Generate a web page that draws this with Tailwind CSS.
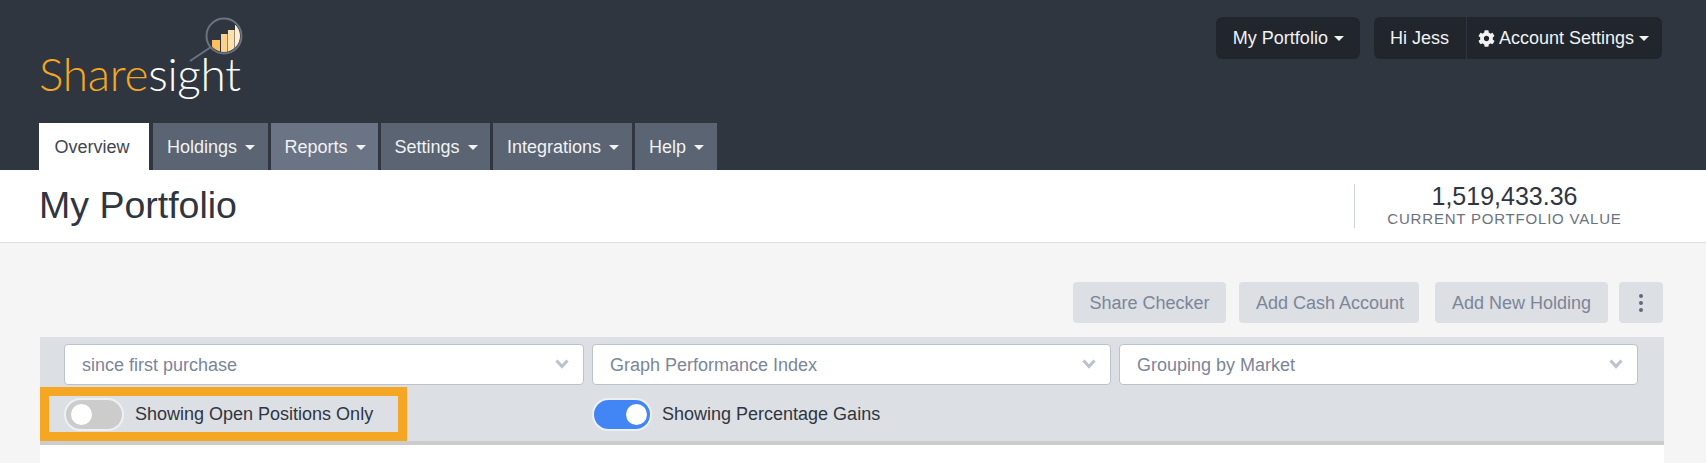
<!DOCTYPE html>
<html lang="en">
<head>
  <meta charset="UTF-8" />
  <meta name="viewport" content="width=device-width, initial-scale=1" />
  <title>Sharesight - My Portfolio</title>
  <script src="https://cdn.jsdelivr.net/npm/@tailwindcss/browser@4"></script>
</head>
<body class="h-[463px] overflow-hidden bg-[#f5f5f5] font-['Liberation_Sans',Arial,sans-serif] text-[18px] text-[#2f3640]">

  <!-- top bar -->
  <header class="h-[170px] bg-[#2f3640] px-[39px] flex flex-col">
    <div class="flex-1 flex justify-between">
      <div class="relative w-[220px]">
        <div class="absolute left-0 top-[44px] text-[46px] leading-[60px] font-['Lato',sans-serif] font-light tracking-[-0.3px] whitespace-nowrap">
          <span class="text-[#f5a623]">Share</span><span class="text-white">sight</span>
        </div>
        <svg class="absolute left-[109px] top-[14px]" width="96" height="56" viewBox="148 14 96 56">
          <defs><clipPath id="lens"><circle cx="224" cy="36" r="16" /></clipPath></defs>
          <line x1="190" y1="61" x2="211" y2="47" stroke="#6b7280" stroke-width="2" />
          <g clip-path="url(#lens)">
            <rect x="212" y="40" width="8" height="12" fill="#fbbf5d" />
            <rect x="221" y="34" width="6.500" height="18" fill="#fcd28b" />
            <rect x="228" y="30" width="6.500" height="22" fill="#fde0ae" />
            <rect x="235" y="25" width="5" height="27" fill="#fff0d5" />
          </g>
          <circle cx="224" cy="36" r="17.500" fill="none" stroke="#6b7280" stroke-width="2" />
        </svg>
      </div>

      <div class="flex gap-[14px] mt-[17px] h-[42px] mr-[5px] text-[#f1f2f4]">
        <div class="flex items-center gap-[6px] pl-[17px] pr-[16px] bg-[#21262d] rounded-[6px]">
          My Portfolio
          <span class="border-x-[5px] border-t-[5px] border-x-transparent border-t-[#f1f2f4]"></span>
        </div>
        <div class="flex bg-[#21262d] rounded-[6px]">
          <div class="flex items-center pl-[16px] pr-[17px] border-r border-[#2f3640]">Hi Jess</div>
          <div class="flex items-center gap-[4px] pl-[11px] pr-[13px]">
            <svg width="17" height="17" viewBox="0 0 512 512" fill="#f1f2f4"><path d="M487.4 315.7l-42.6-24.6c4.3-23.2 4.3-47 0-70.2l42.6-24.6c4.9-2.8 7.1-8.6 5.5-14-11.1-35.6-30-67.8-54.7-94.6-3.8-4.1-10-5.1-14.8-2.3L380.8 110c-17.9-15.4-38.5-27.3-60.8-35.1V25.8c0-5.6-3.9-10.5-9.4-11.7-36.7-8.2-74.3-7.8-109.2 0-5.5 1.2-9.4 6.1-9.4 11.7V75c-22.2 7.9-42.8 19.8-60.8 35.1L88.7 85.500c-4.9-2.8-11-1.9-14.8 2.3-24.7 26.7-43.6 58.9-54.7 94.6-1.7 5.4.6 11.2 5.5 14L67.3 221c-4.3 23.2-4.3 47 0 70.2l-42.6 24.6c-4.9 2.8-7.1 8.6-5.5 14 11.1 35.6 30 67.8 54.7 94.6 3.8 4.1 10 5.1 14.8 2.3l42.6-24.6c17.9 15.4 38.5 27.3 60.8 35.1v49.2c0 5.6 3.9 10.5 9.4 11.7 36.7 8.2 74.3 7.8 109.2 0 5.5-1.2 9.4-6.1 9.4-11.7v-49.2c22.2-7.9 42.8-19.8 60.8-35.1l42.6 24.6c4.9 2.8 11 1.9 14.8-2.3 24.7-26.7 43.6-58.9 54.7-94.6 1.500-5.5-.7-11.3-5.6-14.1zM256 336c-44.1 0-80-35.9-80-80s35.9-80 80-80 80 35.9 80 80-35.9 80-80 80z" /></svg>
            Account Settings
            <span class="border-x-[5px] border-t-[5px] border-x-transparent border-t-[#f1f2f4] ml-[1px]"></span>
          </div>
        </div>
      </div>
    </div>

    <!-- tabs -->
    <nav class="flex h-[47px] gap-[3px] text-[#f1f2f4]">
      <div class="w-[110px] mr-[1px] pr-[4px] pt-[1px] flex items-center justify-center bg-white text-[#3f4650]">Overview</div>
      <div class="w-[115px] pl-[1px] pt-[1px] flex items-center justify-center gap-[8px] bg-[#5a6472]">Holdings <span class="border-x-[5px] border-t-[5px] border-x-transparent border-t-[#f1f2f4]"></span></div>
      <div class="w-[107px] pl-[1px] pt-[1px] flex items-center justify-center gap-[8px] bg-[#6b7485]">Reports <span class="border-x-[5px] border-t-[5px] border-x-transparent border-t-[#f1f2f4]"></span></div>
      <div class="w-[109px] pl-[1px] pt-[1px] flex items-center justify-center gap-[8px] bg-[#5a6472]">Settings <span class="border-x-[5px] border-t-[5px] border-x-transparent border-t-[#f1f2f4]"></span></div>
      <div class="w-[139px] pl-[1px] pt-[1px] flex items-center justify-center gap-[8px] bg-[#5a6472]">Integrations <span class="border-x-[5px] border-t-[5px] border-x-transparent border-t-[#f1f2f4]"></span></div>
      <div class="w-[82px] pl-[1px] pt-[1px] flex items-center justify-center gap-[8px] bg-[#5a6472]">Help <span class="border-x-[5px] border-t-[5px] border-x-transparent border-t-[#f1f2f4]"></span></div>
    </nav>
  </header>

  <!-- page title -->
  <div class="h-[73px] bg-white border-b border-[#dcdfe4] pl-[39px] pr-[52px] flex items-center justify-between">
    <h1 class="text-[37.500px] leading-[40px] mb-[3px]">My Portfolio</h1>
    <div class="w-[300px] h-[44px] mb-[1px] border-l border-[#cfd2d6] flex flex-col items-center justify-center">
      <div class="text-[25px] leading-[26px]">1,519,433.36</div>
      <div class="text-[15px] leading-[20px] tracking-[0.8px] text-[#6b7280] uppercase">Current Portfolio Value</div>
    </div>
  </div>

  <main class="px-[40px] pr-[42px]">
    <!-- actions -->
    <div class="flex justify-end pt-[39px] h-[94px] text-[#7b8698]">
      <div class="w-[153px] h-[41px] pt-[1px] flex items-center justify-center bg-[#dcdfe4] rounded-[4px]">Share Checker</div>
      <div class="w-[180px] h-[41px] ml-[13px] pl-[2px] pt-[1px] flex items-center justify-center bg-[#dcdfe4] rounded-[4px]">Add Cash Account</div>
      <div class="w-[173px] h-[41px] ml-[16px] pt-[1px] flex items-center justify-center bg-[#dcdfe4] rounded-[4px]">Add New Holding</div>
      <div class="w-[44px] h-[41px] ml-[11px] mr-[1px] flex flex-col items-center justify-center gap-[3px] bg-[#dcdfe4] rounded-[4px]">
        <span class="size-[4px] rounded-full bg-[#5f6b7c]"></span>
        <span class="size-[4px] rounded-full bg-[#5f6b7c]"></span>
        <span class="size-[4px] rounded-full bg-[#5f6b7c]"></span>
      </div>
    </div>

    <!-- filters -->
    <section class="h-[108px] bg-[#dcdfe4] border-b-[4px] border-[#cccccc]">
      <div class="flex gap-[8px] pt-[7px] pl-[24px] pr-[26px] text-[#7b8698]">
        <div class="w-[520px] h-[41px] flex items-center justify-between pl-[17px] pr-[14px] pb-[1px] bg-white border border-[#bcc2cc] rounded-[4px]">
          <span class="pt-[2px]">since first purchase</span>
          <svg width="14" height="10" viewBox="0 0 14 10" fill="none" stroke="#bcc2cc" stroke-width="3"><path d="M1.500 1.500 7 7.500l5.500-6" /></svg>
        </div>
        <div class="w-[519px] h-[41px] flex items-center justify-between pl-[17px] pr-[14px] pb-[1px] bg-white border border-[#bcc2cc] rounded-[4px]">
          <span class="pt-[2px]">Graph Performance Index</span>
          <svg width="14" height="10" viewBox="0 0 14 10" fill="none" stroke="#bcc2cc" stroke-width="3"><path d="M1.500 1.500 7 7.500l5.500-6" /></svg>
        </div>
        <div class="flex-1 h-[41px] flex items-center justify-between pl-[17px] pr-[14px] pb-[1px] bg-white border border-[#bcc2cc] rounded-[4px]">
          <span class="pt-[2px]">Grouping by Market</span>
          <svg width="14" height="10" viewBox="0 0 14 10" fill="none" stroke="#bcc2cc" stroke-width="3"><path d="M1.500 1.500 7 7.500l5.500-6" /></svg>
        </div>
      </div>

      <div class="flex mt-[2px]">
        <div class="w-[367px] h-[54px] flex items-center gap-[11px] pl-[15px] border-[9px] border-[#f5a623]">
          <div class="w-[60px] h-[33px] flex items-center pl-[5px] bg-[#cccccc] border-[2px] border-[#eff0f2] rounded-full">
            <span class="size-[21px] rounded-full bg-white"></span>
          </div>
          Showing Open Positions Only
        </div>
        <div class="ml-[185px] h-[54px] flex items-center gap-[10px]">
          <div class="w-[60px] h-[33px] flex items-center justify-end pr-[3px] bg-[#4285f4] border-[2px] border-[#eff0f2] rounded-full">
            <span class="size-[21px] rounded-full bg-white"></span>
          </div>
          Showing Percentage Gains
        </div>
      </div>
    </section>

    <div class="h-[30px] bg-white"></div>
  </main>
</body>
</html>
